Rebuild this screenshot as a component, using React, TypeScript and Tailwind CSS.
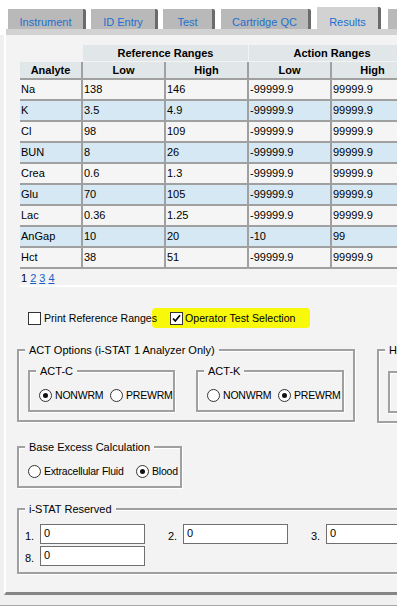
const rows = [
  ["Na", "138", "146", "-99999.9", "99999.9"],
  ["K", "3.5", "4.9", "-99999.9", "99999.9"],
  ["Cl", "98", "109", "-99999.9", "99999.9"],
  ["BUN", "8", "26", "-99999.9", "99999.9"],
  ["Crea", "0.6", "1.3", "-99999.9", "99999.9"],
  ["Glu", "70", "105", "-99999.9", "99999.9"],
  ["Lac", "0.36", "1.25", "-99999.9", "99999.9"],
  ["AnGap", "10", "20", "-10", "99"],
  ["Hct", "38", "51", "-99999.9", "99999.9"],
];

const colW = ["w-[63px]", "w-[83px]", "w-[83px]", "w-[83px]", "w-[83px]"];

const Check = ({ checked }: { checked?: boolean }) => (
  <span className="w-[13px] h-[13px] shrink-0 border border-[#333] bg-white flex items-center justify-center">
    {checked && (
      <svg width="11" height="11" viewBox="0 0 11 11">
        <path d="M2 5.5 L4.3 8 L9 2.3" fill="none" stroke="#000" strokeWidth="1.7" />
      </svg>
    )}
  </span>
);

const Radio = ({ on, label, w }: { on?: boolean; label: string; w?: string }) => (
  <div className={`flex items-center shrink-0 ${w ?? ""}`}>
    <span className="w-[13px] h-[13px] shrink-0 rounded-full border border-[#333] bg-white flex items-center justify-center">
      {on && <span className="w-[5px] h-[5px] rounded-full bg-[#111]" />}
    </span>
    <span className="ml-[3px] whitespace-nowrap text-[10.5px] tracking-[-0.2px]">{label}</span>
  </div>
);

const Group = ({
  title,
  className,
  children,
}: {
  title: string;
  className: string;
  children?: React.ReactNode;
}) => (
  <div
    className={`relative shrink-0 border-2 border-[#a0a0a0] shadow-[inset_1px_1px_0_#fff,1px_1px_0_#fff] ${className}`}
  >
    {title && (
      <span className="absolute -top-[7px] left-[6px] px-[4px] bg-[#f3f3f3] leading-[13px] whitespace-nowrap">
        {title}
      </span>
    )}
    {children}
  </div>
);

const Field = ({ n, w }: { n: string; w: string }) => (
  <div className={`flex items-center shrink-0 ${w}`}>
    <span className="w-[15px] pt-[4px]">{n}</span>
    <input
      readOnly
      value="0"
      className="w-[105px] h-[20px] border border-[#6f6f6f] bg-white pl-[3px] pb-[3px] text-[11px] outline-none"
    />
  </div>
);

const App = () => {
  return (
    <div className="w-[397px] h-[607px] overflow-hidden bg-white text-[11px] leading-[13px] text-black font-['Liberation_Sans',Arial,sans-serif]">
      {/* tabs */}
      <div className="flex items-end h-[29px] text-[#1e6fd0]">
        <div className="ml-[8px] w-[78px] h-[20px] shrink-0 bg-[#b9b9b9] border-r-[3px] border-[#6b6b6b] rounded-tr-[2px] flex justify-center pt-[7px]">
          Instrument
        </div>
        <div className="ml-[5px] w-[67px] h-[20px] shrink-0 bg-[#b9b9b9] border-r-[3px] border-[#6b6b6b] rounded-tr-[2px] flex justify-center pt-[7px]">
          ID Entry
        </div>
        <div className="ml-[5px] w-[52px] h-[20px] shrink-0 bg-[#b9b9b9] border-r-[3px] border-[#6b6b6b] rounded-tr-[2px] flex justify-center pt-[7px]">
          Test
        </div>
        <div className="ml-[6px] w-[90px] h-[20px] shrink-0 bg-[#b9b9b9] border-r-[3px] border-[#6b6b6b] rounded-tr-[2px] flex justify-center pt-[7px]">
          Cartridge QC
        </div>
        <div className="ml-[6px] w-[64px] h-[22px] shrink-0 bg-[#d2d2d2] border-r-[3px] border-[#6b6b6b] rounded-tr-[2px] flex justify-center pt-[9px]">
          Results
        </div>
        <div className="ml-[7px] w-[60px] h-[20px] shrink-0 bg-[#b9b9b9] border-r-[3px] border-[#6b6b6b]" />
      </div>
      <div className="h-[6px] ml-[4px] border-l-2 border-white bg-[#d2d2d2]" />

      {/* body */}
      <div className="h-[571px] bg-[#f0f0f0] border-b border-[#a8a8a8]">
        <div className="ml-[4px] h-[560px] bg-[#f3f3f3] border-l-2 border-white border-b-[3px] border-b-[#858585] overflow-hidden">
          {/* table */}
          <div className="ml-[14px] mt-[10px] w-[395px] border-b-2 border-white">
            <div className="flex h-[16px] mb-[1px] font-bold">
              <div className="w-[63px]" />
              <div className="w-[165px] mr-[1px] bg-[#e1e6e9] flex items-center justify-center">Reference Ranges</div>
              <div className="w-[166px] bg-[#e1e6e9] flex items-center justify-center">Action Ranges</div>
            </div>
            <div className="flex h-[18px] border-b-2 border-[#a0a0a0] font-bold bg-[#e1e6e9]">
              {["Analyte", "Low", "High", "Low", "High"].map((h, i) => (
                <div key={i} className={`${colW[i]} border-r-2 border-[#a0a0a0] flex items-center justify-center`}>
                  {h}
                </div>
              ))}
            </div>
            {rows.map((r, ri) => (
              <div
                key={ri}
                className={`flex h-[21px] border-b-2 border-[#a0a0a0] ${ri % 2 === 1 ? "bg-[#d5e8f3]" : "bg-[#f5f5f5]"}`}
              >
                {r.map((c, ci) => (
                  <div key={ci} className={`${colW[ci]} border-r-2 border-[#a0a0a0] flex items-center pl-[1px]`}>
                    {c}
                  </div>
                ))}
              </div>
            ))}
            <div className="h-[16px] pt-[3px] pl-[1px] flex gap-[3px]">
              <span>1</span>
              <span className="text-[#1a5fc8] underline">2</span>
              <span className="text-[#1a5fc8] underline">3</span>
              <span className="text-[#1a5fc8] underline">4</span>
            </div>
          </div>

          {/* checkboxes */}
          <div className="relative mt-[21px] ml-[22px] h-[20px] flex items-center">
            <div className="absolute left-[124px] top-0 w-[158px] h-[20px] bg-[#f8f80a] rounded-[4px]" />
            <div className="relative flex items-center w-[142px] shrink-0">
              <Check />
              <span className="ml-[3px] whitespace-nowrap text-[10.6px]">Print Reference Ranges</span>
            </div>
            <div className="relative flex items-center">
              <Check checked />
              <span className="ml-[2px] whitespace-nowrap text-[10.6px]">Operator Test Selection</span>
            </div>
          </div>

          {/* ACT options row */}
          <div className="mt-[21px] ml-[11px] flex">
            <Group title="ACT Options (i-STAT 1 Analyzer Only)" className="w-[338px] h-[73px] pl-[9px] pt-[19px]">
              <div className="flex gap-[21px]">
                <Group title="ACT-C" className="w-[147px] h-[42px] pl-[9px] pt-[17px]">
                  <div className="flex">
                    <Radio on label="NONWRM" w="w-[71px]" />
                    <Radio label="PREWRM" />
                  </div>
                </Group>
                <Group title="ACT-K" className="w-[148px] h-[42px] pl-[9px] pt-[17px]">
                  <div className="flex">
                    <Radio label="NONWRM" w="w-[71px]" />
                    <Radio on label="PREWRM" />
                  </div>
                </Group>
              </div>
            </Group>
            <Group title="Hematocrit" className="ml-[22px] w-[150px] h-[74px] pl-[9px] pt-[20px]">
              <Group title="" className="w-[130px] h-[42px]" />
            </Group>
          </div>

          {/* base excess */}
          <Group title="Base Excess Calculation" className="mt-[23px] ml-[11px] w-[165px] h-[42px] pl-[9px] pt-[17px]">
            <div className="flex">
              <Radio label="Extracellular Fluid" w="w-[108px]" />
              <Radio on label="Blood" />
            </div>
          </Group>

          {/* reserved */}
          <Group title="i-STAT Reserved" className="mt-[20px] ml-[11px] w-[420px] h-[66px] pl-[6px] pt-[14px]">
            <div className="flex gap-[23px]">
              <Field n="1." w="w-[120px]" />
              <Field n="2." w="w-[120px]" />
              <Field n="3." w="w-[120px]" />
            </div>
            <div className="mt-[2px]">
              <Field n="8." w="w-[120px]" />
            </div>
          </Group>
        </div>
      </div>
    </div>
  );
};

export default App;
